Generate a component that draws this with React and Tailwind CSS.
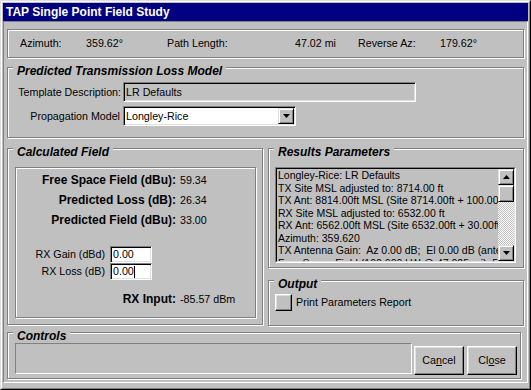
import React from "react";

// win95-ish bevels
const etched = "border border-[#808080] shadow-[inset_1px_1px_0_#ffffff,1px_1px_0_#ffffff]";
const sunken =
  "border border-t-[#808080] border-l-[#808080] border-b-white border-r-white shadow-[inset_1px_1px_0_#000000,inset_-1px_-1px_0_#dfdfdf]";
const raised =
  "border border-t-[#dfdfdf] border-l-[#dfdfdf] border-b-black border-r-black shadow-[inset_1px_1px_0_#ffffff,inset_-1px_-1px_0_#808080]";
const button =
  "border border-t-white border-l-white border-b-black border-r-black shadow-[inset_-1px_-1px_0_#808080,inset_1px_1px_0_#dfdfdf]";

const results = [
  "Longley-Rice: LR Defaults",
  "TX Site MSL adjusted to: 8714.00 ft",
  "TX Ant: 8814.00ft MSL (Site 8714.00ft + 100.00ft AGL)",
  "RX Site MSL adjusted to: 6532.00 ft",
  "RX Ant: 6562.00ft MSL (Site 6532.00ft + 30.00ft AGL)",
  "Azimuth: 359.620",
  "TX Antenna Gain:  Az 0.00 dB;  El 0.00 dB (antenna)",
  "Free Space Field (100.000 kW @ 47.025 mi): 59.34",
];

function Group({ title, className, children }) {
  return (
    <div className={`relative ${etched} ${className}`}>
      <span className="absolute left-[5px] top-[-4px] bg-[#c0c0c0] px-[4px] text-[12px] leading-[14px] font-bold italic whitespace-nowrap">
        {title}
      </span>
      {children}
    </div>
  );
}

function Arrow({ up }) {
  return (
    <svg width="7" height="4" viewBox="0 0 7 4">
      {up ? <polygon points="3.5,0 7,4 0,4" fill="#000" /> : <polygon points="0,0 7,0 3.5,4" fill="#000" />}
    </svg>
  );
}

function FieldRow({ label, value }) {
  return (
    <div className="flex h-[20px] items-center whitespace-nowrap">
      <span className="w-[160px] shrink-0 text-right text-[12px] font-bold">{label}</span>
      <span className="ml-[4px]">{value}</span>
    </div>
  );
}

export default function App() {
  return (
    <div className="w-[531px] h-[390px] bg-[#c0c0c0] text-[10.7px] text-black font-['Liberation_Sans',Arial,sans-serif] border border-t-[#dfdfdf] border-l-[#dfdfdf] border-b-black border-r-black">
      <div className="h-full flex flex-col p-[1px] border border-t-white border-l-white border-b-[#808080] border-r-[#808080]">
        <div className="h-[18px] bg-[#000080] text-white text-[12px] font-bold flex items-center pl-[3px]">
          TAP Single Point Field Study
        </div>

        <div className="h-[362px] flex flex-col px-[3px] border border-t-[#808080] border-l-[#808080] border-b-white border-r-white">
          {/* summary strip */}
          <div className={`mt-[7px] h-[29px] flex items-center pl-[12px] whitespace-nowrap ${etched}`}>
            <span className="w-[66px]">Azimuth:</span>
            <span className="w-[81px]">359.62°</span>
            <span className="w-[128px]">Path Length:</span>
            <span className="w-[63px]">47.02 mi</span>
            <span className="w-[82px]">Reverse Az:</span>
            <span>179.62°</span>
          </div>

          <Group title="Predicted Transmission Loss Model" className="mt-[9px] h-[71px] pt-[14px] pl-[9px]">
            <div className="flex items-center h-[20px] whitespace-nowrap">
              <span className="w-[104px] shrink-0 text-right">Template Description:</span>
              <div className={`ml-[2px] w-[293px] h-[20px] flex items-center pl-[2px] bg-[#c0c0c0] ${sunken}`}>
                LR Defaults
              </div>
            </div>
            <div className="flex items-center h-[20px] mt-[4px] whitespace-nowrap">
              <span className="w-[104px] shrink-0 text-right pr-[1px]">Propagation Model</span>
              <div className={`ml-[2px] w-[173px] h-[20px] flex items-center bg-white ${sunken}`}>
                <span className="flex-1 pl-[2px]">Longley-Rice</span>
                <div className={`w-[16px] h-[16px] mr-[1px] flex items-center justify-center bg-[#c0c0c0] ${raised}`}>
                  <Arrow />
                </div>
              </div>
            </div>
          </Group>

          <div className="mt-[10px] flex gap-[5px]">
            <Group title="Calculated Field" className="w-[256px] h-[177px] pt-[18px] pl-[7px]">
              <div className={`w-[241px] h-[151px] pt-[2px] ${etched}`}>
                <FieldRow label="Free Space Field (dBu):" value="59.34" />
                <FieldRow label="Predicted Loss (dB):" value="26.34" />
                <FieldRow label="Predicted Field (dBu):" value="33.00" />
                <div className="mt-[16px] flex flex-col whitespace-nowrap">
                  <div className="flex items-center h-[17px]">
                    <span className="w-[89px] shrink-0 text-right">RX Gain (dBd)</span>
                    <div className={`ml-[5px] w-[42px] h-[17px] flex items-center pl-[2px] bg-white ${sunken}`}>0.00</div>
                  </div>
                  <div className="flex items-center h-[17px]">
                    <span className="w-[89px] shrink-0 text-right">RX Loss (dB)</span>
                    <div className={`ml-[5px] w-[42px] h-[17px] flex items-center pl-[2px] bg-white ${sunken}`}>
                      0.00
                      <span className="w-[1px] h-[12px] bg-black" />
                    </div>
                  </div>
                </div>
                <div className="mt-[9px]">
                  <FieldRow label="RX Input:" value="-85.57 dBm" />
                </div>
              </div>
            </Group>

            <div className="w-[256px] flex flex-col">
              <Group title="Results Parameters" className="h-[120px] pt-[18px] pl-[6px]">
                <div className="w-[241px] h-[96px] border border-t-[#808080] border-l-[#808080] border-b-white border-r-white">
                  <div className="h-full flex border border-t-black border-l-black border-b-[#dfdfdf] border-r-[#dfdfdf]">
                    <div className="flex-1 overflow-hidden pl-[1px] text-[10.5px] leading-[12.5px] whitespace-pre">
                      {results.map((line) => (
                        <div key={line}>{line}</div>
                      ))}
                    </div>
                    <div className="w-[16px] flex flex-col">
                      <div className={`h-[16px] flex items-center justify-center ${raised}`}>
                        <Arrow up />
                      </div>
                      <div className={`h-[17px] ${raised}`} />
                      <div className="flex-1 bg-[repeating-conic-gradient(#ffffff_0%_25%,#c0c0c0_0%_50%)] bg-[length:2px_2px]" />
                      <div className={`h-[16px] flex items-center justify-center ${raised}`}>
                        <Arrow />
                      </div>
                    </div>
                  </div>
                </div>
              </Group>

              <Group title="Output" className="mt-[12px] h-[46px] pt-[13px] pl-[6px]">
                <div className="flex items-center whitespace-nowrap">
                  <div className={`w-[17px] h-[17px] ${button}`} />
                  <span className="ml-[4px]">Print Parameters Report</span>
                </div>
              </Group>
            </div>
          </div>

          <Group title="Controls" className="mt-[6px] w-[514px] h-[47px] pt-[10px] pl-[7px]">
            <div className="flex items-start">
              <div className="w-[397px] h-[31px] border border-t-[#808080] border-l-[#808080] border-b-white border-r-white" />
              <div className={`mt-[3px] ml-[2px] w-[50px] h-[29px] flex items-center justify-center ${button}`}>
                Ca<span className="underline">n</span>cel
              </div>
              <div className={`mt-[3px] ml-[3px] w-[50px] h-[29px] flex items-center justify-center ${button}`}>
                Cl<span className="underline">o</span>se
              </div>
            </div>
          </Group>
        </div>
      </div>
    </div>
  );
}
